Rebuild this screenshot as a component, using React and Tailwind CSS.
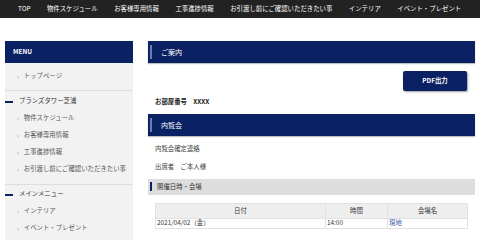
import React from 'react'

const NAV = ['TOP', '物件スケジュール', 'お客様専用情報', '工事進捗情報', 'お引渡し前にご確認いただきたい事', 'インテリア', 'イベント・プレゼント']

const GROUP1 = ['物件スケジュール', 'お客様専用情報', '工事進捗情報', 'お引渡し前にご確認いただきたい事']
const GROUP2 = ['インテリア', 'イベント・プレゼント', '家具販売会']

function SideItem({ label }) {
  return (
    <div className="h-[17px] flex items-center pl-[12px] gap-[5px] text-[#555]">
      <span className="text-[6px] text-[#888]">›</span>
      <span>{label}</span>
    </div>
  )
}

function GroupTitle({ label }) {
  return (
    <div className="h-[17px] flex items-center gap-[6px] text-[#333]">
      <span className="w-[8px] h-[2px] bg-[#0a2163]" />
      <span>{label}</span>
    </div>
  )
}

function SectionBar({ title }) {
  return (
    <div className="h-[22px] bg-[#0a2163] flex items-center pl-[2px] shadow-[0_1px_1px_rgba(0,0,0,0.25)]">
      <div className="h-[14px] border-l-2 border-[#6b7fae] pl-[9px] flex items-center text-white text-[7px]">{title}</div>
    </div>
  )
}

export default function App() {
  return (
    <div className="w-[480px] h-[240px] overflow-hidden bg-white text-[6.4px] leading-none" style={{ fontFamily: '"Noto Sans CJK JP", "Noto Sans", sans-serif' }}>
      {/* Top nav */}
      <div className="h-[18px] bg-[#222] flex items-center pl-[18px] gap-[16.5px] text-white">
        {NAV.map(n => <span key={n} className="whitespace-nowrap">{n}</span>)}
      </div>

      <div className="flex pl-[5px] pt-[23px] gap-[15px]">
        {/* Sidebar */}
        <aside className="w-[128px] h-[200px] bg-[#f2f2f2] shrink-0">
          <div className="h-[22px] bg-[#0a2163] flex items-center pl-[8px] text-white font-bold text-[6.4px]">MENU</div>
          <div className="pt-[5px]">
            <SideItem label="トップページ" />
          </div>
          <div className="h-px bg-[#ddd] mt-[5px] mb-[2px]" />
          <GroupTitle label="ブランズタワー芝浦" />
          {GROUP1.map(l => <SideItem key={l} label={l} />)}
          <div className="h-px bg-[#ddd] mt-[6px] mb-[1px]" />
          <GroupTitle label="メインメニュー" />
          {GROUP2.map(l => <SideItem key={l} label={l} />)}
        </aside>

        {/* Main */}
        <main className="w-[327px] shrink-0 text-[#333]">
          <SectionBar title="ご案内" />
          <div className="flex justify-end pr-[8px] pt-[8px]">
            <button className="w-[64px] h-[20px] rounded-[2px] bg-[#0a2163] text-white font-bold text-[6.4px] shadow-[1px_1px_2px_rgba(0,0,0,0.4)]">PDF出力</button>
          </div>
          <div className="pl-[7px] pt-[8px] h-[23px] font-bold text-[#222]">お部屋番号　XXXX</div>
          <SectionBar title="内覧会" />
          <div className="pl-[7px] pt-[10px] text-[#444]">内覧会確定連絡</div>
          <div className="pl-[7px] pt-[12px] text-[#444]">出席者　ご本人様</div>
          <div className="mt-[8px] h-[16px] bg-[#ddd] flex items-center pl-[2px]">
            <div className="h-[9px] border-l-2 border-[#0a2163] pl-[5px] flex items-center text-[#333]">開催日時・会場</div>
          </div>
          <div className="px-[7px] pt-[8px]">
            <table className="w-full border-collapse text-[#333]">
              <thead>
                <tr className="bg-[#eee]">
                  <th className="h-[15px] font-normal w-[170px] border border-[#e2e2e2]">日付</th>
                  <th className="h-[15px] font-normal w-[62px] border border-[#e2e2e2]">時間</th>
                  <th className="h-[15px] font-normal border border-[#e2e2e2]">会場名</th>
                </tr>
              </thead>
              <tbody>
                <tr>
                  <td className="h-[10px] text-left border border-[#e2e2e2] pl-px">2021/04/02（金）</td>
                  <td className="h-[10px] text-left border border-[#e2e2e2] pl-px">14:00</td>
                  <td className="h-[10px] text-left border border-[#e2e2e2] pl-px text-[#3a56a8]">現地</td>
                </tr>
              </tbody>
            </table>
          </div>
        </main>
      </div>
    </div>
  )
}
